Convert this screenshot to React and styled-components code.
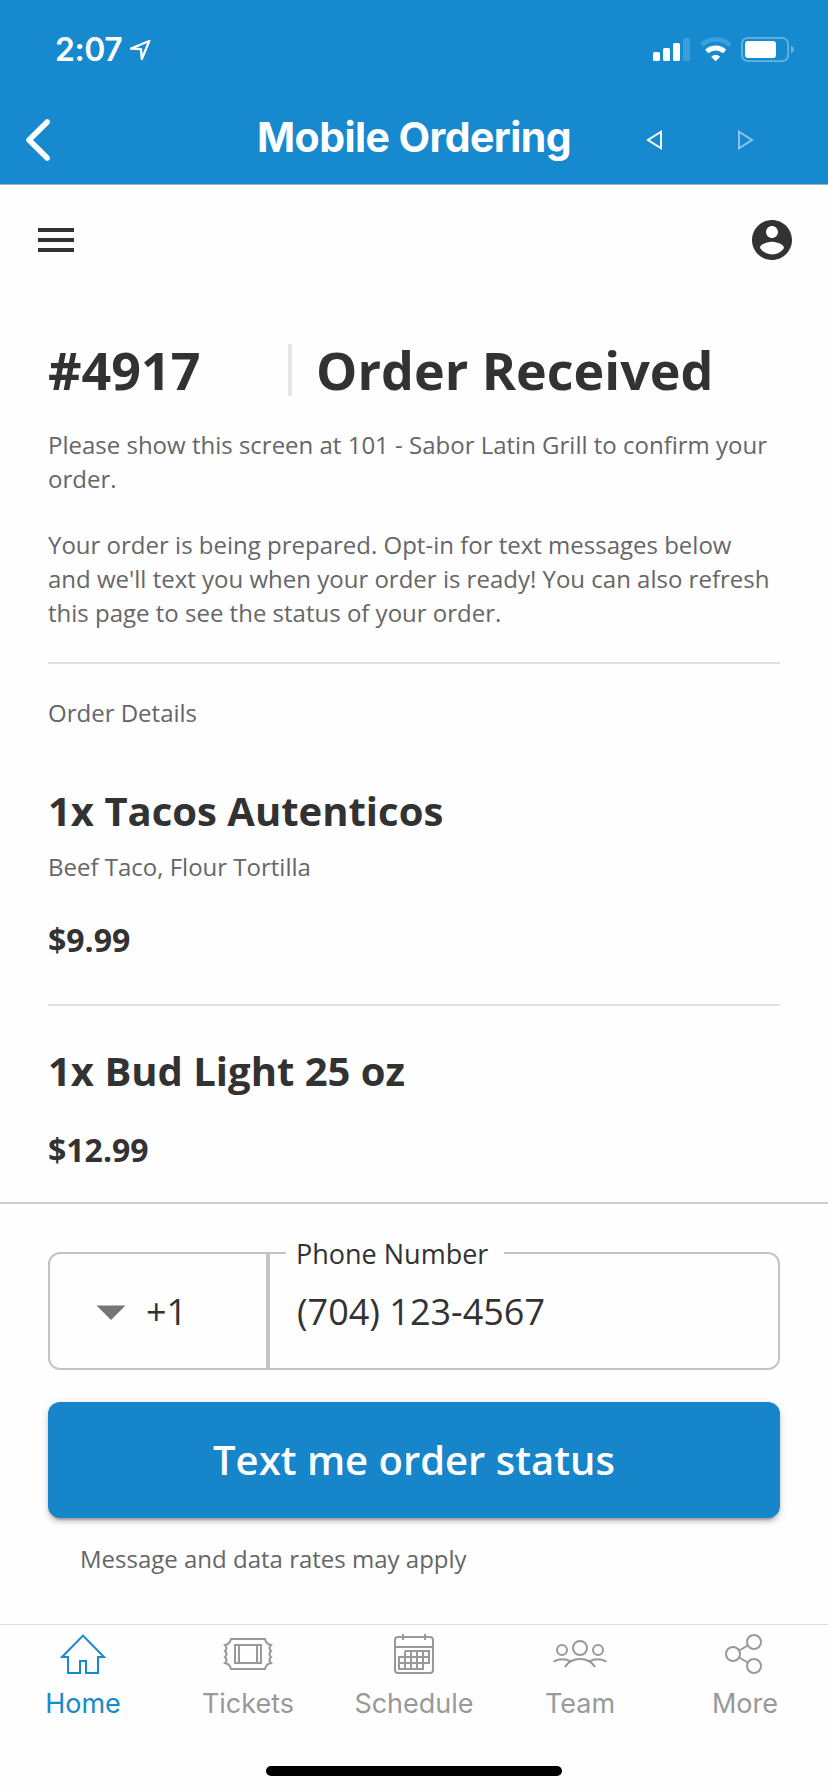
import React from "react";
import styled, { createGlobalStyle } from "styled-components";

const GlobalStyle = createGlobalStyle`
  *, *::before, *::after { box-sizing: border-box; }
  body { margin: 0; background: #fefefe; }
  h1, h2, p { margin: 0; font-weight: inherit; }
  button { font: inherit; border: 0; padding: 0; background: none; color: inherit; }
  svg { display: block; flex: none; overflow: visible; }
`;

const Screen = styled.div`
  width: 828px;
  height: 1792px;
  display: flex;
  flex-direction: column;
  overflow: hidden;
  background: #fefefe;
  color: #323232;
  font-family: "Open Sans", sans-serif;
`;

const Header = styled.header`
  height: 185px;
  background: #1789cf;
  border-bottom: 1px solid #a3b0b6;
  color: #fff;
  font-family: Inter, sans-serif;
`;

const StatusBar = styled.div`
  height: 96px;
  padding: 30px 33px 0 55px;
  display: flex;
  align-items: flex-start;
`;

const Clock = styled.span`
  width: 74px;
  font-size: 32px;
  line-height: 40px;
  font-weight: 600;
  letter-spacing: -0.5px;
  white-space: nowrap;
`;

const StatusIcons = styled.div`
  margin-left: auto;
  display: flex;
  gap: 10px;
`;

const NavBar = styled.div`
  height: 88px;
  display: grid;
  grid-template-columns: 1fr auto 1fr;
  align-items: center;
`;

const BackButton = styled.button`
  justify-self: start;
  margin-left: 24px;
`;

const NavTitle = styled.h1`
  padding-bottom: 6px;
  font-size: 41px;
  line-height: 50px;
  font-weight: 700;
  letter-spacing: -0.57px;
`;

const HistoryControls = styled.div`
  display: flex;
  justify-content: flex-end;
  gap: 74px;
  padding-right: 73px;
`;

const Toolbar = styled.div`
  display: flex;
  justify-content: space-between;
  padding: 31px 32px 0;
  height: 159px;
`;

const Content = styled.main`
  flex: 1;
  padding: 0 48px;
`;

const OrderHeading = styled.div`
  display: flex;
  height: 52px;
  font-size: 52px;
  line-height: 52px;
  font-weight: 700;
  white-space: nowrap;
`;

const OrderNumber = styled.span`
  width: 240px;
`;

const OrderState = styled.span`
  border-left: 4px solid #e6e6e6;
  padding-left: 24px;
`;

const BodyText = styled.p`
  margin-top: ${(p) => p.$top || 0}px;
  font-size: 24px;
  line-height: 34px;
  color: #666;
`;

const Divider = styled.hr`
  height: 2px;
  margin: ${(p) => p.$top}px 0 0;
  border: 0;
  background: #e0e0e0;
`;

const ItemName = styled.h2`
  margin-top: ${(p) => p.$top}px;
  font-size: 40px;
  line-height: 56px;
  font-weight: 700;
`;

const Price = styled.p`
  margin-top: ${(p) => p.$top}px;
  font-size: 32px;
  line-height: 40px;
  font-weight: 700;
`;

const OptInPanel = styled.section`
  height: 422px;
  border-top: 2px solid #ccc;
  padding: 48px 48px 0;
`;

const PhoneField = styled.div`
  position: relative;
  display: flex;
  height: 118px;
  border: 2px solid #c4c4c4;
  border-radius: 12px;
  font-size: 36px;
  line-height: 112px;
`;

const CountryCode = styled.div`
  width: 220px;
  padding: 2px 0 0 46px;
  border-right: 4px solid #c4c4c4;
  display: flex;
  align-items: center;
  gap: 20px;
`;

const FieldLabel = styled.label`
  position: absolute;
  left: 236px;
  top: -16px;
  width: 218px;
  padding-left: 10px;
  background: #fefefe;
  font-size: 27px;
  line-height: 32px;
  white-space: nowrap;
`;

const PhoneValue = styled.div`
  padding: 2px 0 0 27px;
  white-space: nowrap;
`;

const SubmitButton = styled.button`
  display: block;
  width: 100%;
  height: 116px;
  margin-top: 32px;
  border-radius: 12px;
  background: #1785ca;
  color: #fff;
  font-size: 40px;
  line-height: 116px;
  font-weight: 600;
  box-shadow: 0 6px 2px -4px rgba(0, 0, 0, 0.2), 0 4px 4px rgba(0, 0, 0, 0.14), 0 2px 10px rgba(0, 0, 0, 0.12);
`;

const Disclaimer = styled(BodyText)`
  padding-left: 32px;
`;

const TabBar = styled.nav`
  height: 168px;
  border-top: 1px solid #ddd;
  font-family: Inter, sans-serif;
`;

const Tabs = styled.div`
  height: 141px;
  padding-top: 5px;
  display: grid;
  grid-template-columns: 166px 164px 168px 164px 166px;
`;

const Tab = styled.div`
  display: flex;
  flex-direction: column;
  align-items: center;
  gap: 9px;
  color: ${(p) => (p.$active ? "#1789cf" : "#999")};
  font-size: 27px;
  line-height: 34px;
`;

const HomeIndicator = styled.div`
  width: 296px;
  height: 10px;
  margin: 0 auto;
  border-radius: 5px;
  background: #000;
`;

const TabIcon = ({ children }) => (
  <svg width="56" height="48" viewBox="0 0 56 48" fill="none" stroke="currentColor" strokeWidth="2">
    {children}
  </svg>
);

const tabs = [
  {
    label: "Home",
    active: true,
    icon: <path d="M7 27L28 5.6L49 27H43V43H31V31H25V43H13V27Z" />,
  },
  {
    label: "Tickets",
    icon: (
      <>
        <path d="M11 9H45Q46 14 51 15Q48 18 51 21Q48 24 51 27Q48 30 51 33Q46 34 45 39H11Q10 34 5 33Q8 30 5 27Q8 24 5 21Q8 18 5 15Q10 14 11 9Z" />
        <path d="M15 15H41V33H15ZM19 15V33M37 15V33" />
      </>
    ),
  },
  {
    label: "Schedule",
    icon: (
      <>
        <rect x="9" y="7" width="38" height="36" rx="3" />
        <path d="M9 17H47M17 4V10M39 4V10M19 21H43V33H37V39H13V27H43M13 33H43M19 21V39M25 21V39M31 21V39M37 21V39" />
      </>
    ),
  },
  {
    label: "Team",
    icon: (
      <>
        <circle cx="28" cy="18" r="7" />
        <circle cx="10" cy="20" r="5" />
        <circle cx="46" cy="20" r="5" />
        <path d="M13 37Q18 29 28 29T43 37M1.5 31.6Q10 27 19 31.5M54.5 31.6Q46 27 37 31.5" />
      </>
    ),
  },
  {
    label: "More",
    icon: (
      <>
        <circle cx="16" cy="24" r="7" />
        <circle cx="37" cy="12" r="7" />
        <circle cx="37" cy="36" r="7" />
        <path d="M22.2 20.5L30.8 15.5M22.2 27.5L30.8 32.5" />
      </>
    ),
  },
];

export default function App() {
  return (
    <>
      <GlobalStyle />
      <Screen>
        <Header>
          <StatusBar>
            <Clock>2:07</Clock>
            <svg width="24" height="32" viewBox="129 30 24 32" fill="none" stroke="#fff" strokeWidth="2.3" strokeLinejoin="round">
              <path d="M131 48.5L149.3 41L141.8 59L141 49.2Z" />
            </svg>
            <StatusIcons>
              <svg width="37" height="34" viewBox="653 30 37 34" fill="#fff">
                <rect x="653" y="52" width="7" height="9" rx="1.5" />
                <rect x="663" y="48" width="7" height="13" rx="1.5" />
                <rect x="673" y="43" width="7" height="18" rx="1.5" />
                <rect x="683" y="38" width="7" height="23" rx="1.5" fill="#3a9fda" />
              </svg>
              <svg width="31" height="34" viewBox="700 30 31 34" fill="none" strokeWidth="4.8">
                <path d="M701.5 45.2A20.4 20.4 0 0 1 729.9 45.2" stroke="#3a9fda" />
                <path d="M706.8 51.5A13 13 0 0 1 724.6 51.5" stroke="#fff" />
                <path d="M711.2 56.8Q715.7 52.8 720.2 56.8L715.7 61.2Z" fill="#fff" />
              </svg>
              <svg width="54" height="34" viewBox="741 30 54 34">
                <rect x="741.9" y="37.9" width="46.2" height="23.2" rx="6" fill="none" stroke="#62b4e3" strokeWidth="1.8" />
                <rect x="745" y="41" width="31" height="17" rx="3" fill="#fff" />
                <path d="M791 45.5Q794 47 794 49.5T791 53.5Z" fill="#62b4e3" />
              </svg>
            </StatusIcons>
          </StatusBar>
          <NavBar>
            <BackButton aria-label="Back">
              <svg width="28" height="44" viewBox="24 118 28 44" fill="none" stroke="#fff" strokeWidth="5.6" strokeLinecap="round" strokeLinejoin="round">
                <path d="M47.2 122L29 140L47.2 158" />
              </svg>
            </BackButton>
            <NavTitle>Mobile Ordering</NavTitle>
            <HistoryControls>
              <svg width="18" height="20" viewBox="0 0 18 20" fill="none" stroke="#fff" strokeWidth="2">
                <path d="M16 1.7V18.3L3 10Z" />
              </svg>
              <svg width="18" height="20" viewBox="0 0 18 20" fill="none" stroke="#8bc4e7" strokeWidth="2">
                <path d="M2 1.7V18.3L15 10Z" />
              </svg>
            </HistoryControls>
          </NavBar>
        </Header>

        <Toolbar>
          <svg width="48" height="48" viewBox="0 0 24 24" fill="#323232">
            <path d="M3 18h18v-2H3v2zm0-5h18v-2H3v2zm0-7v2h18V6H3z" />
          </svg>
          <svg width="48" height="48" viewBox="0 0 24 24" fill="#323232">
            <path d="M12 2C6.48 2 2 6.48 2 12s4.48 10 10 10 10-4.48 10-10S17.52 2 12 2zm0 3c1.66 0 3 1.34 3 3s-1.34 3-3 3-3-1.34-3-3 1.34-3 3-3zm0 14.2c-2.5 0-4.71-1.28-6-3.22.03-1.99 4-3.08 6-3.08 1.99 0 5.97 1.09 6 3.08-1.29 1.94-3.5 3.22-6 3.22z" />
          </svg>
        </Toolbar>

        <Content>
          <OrderHeading>
            <OrderNumber>#4917</OrderNumber>
            <OrderState>Order Received</OrderState>
          </OrderHeading>
          <BodyText $top={32}>Please show this screen at 101 - Sabor Latin Grill to confirm your order.</BodyText>
          <BodyText $top={32}>
            Your order is being prepared. Opt-in for text messages below and we'll text you when your order is ready! You can also refresh this page to see the status of your order.
          </BodyText>
          <Divider $top={32} />
          <BodyText $top={32}>Order Details</BodyText>
          <ItemName $top={53}>1x Tacos Autenticos</ItemName>
          <BodyText $top={11}>Beef Taco, Flour Tortilla</BodyText>
          <Price $top={36}>$9.99</Price>
          <Divider $top={44} />
          <ItemName $top={37}>1x Bud Light 25 oz</ItemName>
          <Price $top={31}>$12.99</Price>
        </Content>

        <OptInPanel>
          <PhoneField>
            <CountryCode>
              <svg width="30" height="15" viewBox="0 0 30 15">
                <path d="M0.5 0.5H29.5L15 15Z" fill="#757575" />
              </svg>
              +1
            </CountryCode>
            <PhoneValue>(704) 123-4567</PhoneValue>
            <FieldLabel>Phone Number</FieldLabel>
          </PhoneField>
          <SubmitButton>Text me order status</SubmitButton>
          <Disclaimer $top={24}>Message and data rates may apply</Disclaimer>
        </OptInPanel>

        <TabBar>
          <Tabs>
            {tabs.map((tab) => (
              <Tab key={tab.label} $active={tab.active}>
                <TabIcon>{tab.icon}</TabIcon>
                {tab.label}
              </Tab>
            ))}
          </Tabs>
          <HomeIndicator />
        </TabBar>
      </Screen>
    </>
  );
}
